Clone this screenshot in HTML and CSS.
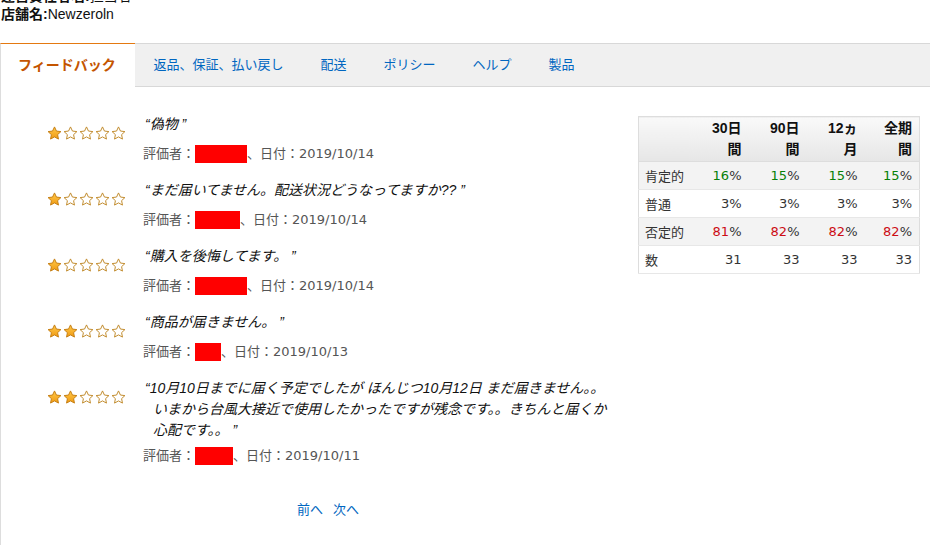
FILE: index.html
```html
<!DOCTYPE html>
<html lang="ja">
<head>
<meta charset="utf-8">
<link rel="stylesheet" href="styles.css">
</head>
<body>
<div class="seller">
  <div class="seller-line"><b>運営責任者名:</b>担当者</div>
  <div class="seller-line"><b>店舗名:</b>Newzeroln</div>
</div>
<div class="tabs">
  <div class="tab active">フィードバック</div>
  <div class="tab">返品、保証、払い戻し</div>
  <div class="tab">配送</div>
  <div class="tab">ポリシー</div>
  <div class="tab">ヘルプ</div>
  <div class="tab">製品</div>
</div>
<div class="content">
  <div class="reviews">
    <div class="review">
      <div class="stars s1"><span></span><span></span><span></span><span></span><span></span></div>
      <div class="body">
        <div class="title">“偽物 ”</div>
        <div class="meta">評価者：<span class="redact w52"></span>、日付：2019/10/14</div>
      </div>
    </div>
    <div class="review">
      <div class="stars s1"><span></span><span></span><span></span><span></span><span></span></div>
      <div class="body">
        <div class="title">“まだ届いてません。配送状況どうなってますか?? ”</div>
        <div class="meta">評価者：<span class="redact w45"></span>、日付：2019/10/14</div>
      </div>
    </div>
    <div class="review">
      <div class="stars s1"><span></span><span></span><span></span><span></span><span></span></div>
      <div class="body">
        <div class="title">“購入を後悔してます。 ”</div>
        <div class="meta">評価者：<span class="redact w52"></span>、日付：2019/10/14</div>
      </div>
    </div>
    <div class="review">
      <div class="stars s2"><span></span><span></span><span></span><span></span><span></span></div>
      <div class="body">
        <div class="title">“商品が届きません。 ”</div>
        <div class="meta">評価者：<span class="redact w26"></span>、日付：2019/10/13</div>
      </div>
    </div>
    <div class="review">
      <div class="stars s2"><span></span><span></span><span></span><span></span><span></span></div>
      <div class="body">
        <div class="title long">“10月10日までに届く予定でしたが ほんじつ10月12日 まだ届きません。。いまから台風大接近で使用したかったですが残念です。。きちんと届くか心配です。。 ”</div>
        <div class="meta">評価者：<span class="redact w38"></span>、日付：2019/10/11</div>
      </div>
    </div>
    <div class="pager"><a>前へ</a><a>次へ</a></div>
  </div>
  <table class="stats">
    <thead>
      <tr><th></th><th>30日<br>間</th><th>90日<br>間</th><th>12ヵ<br>月</th><th>全期<br>間</th></tr>
    </thead>
    <tbody>
      <tr class="shade"><td>肯定的</td><td><span class="pos">16</span>%</td><td><span class="pos">15</span>%</td><td><span class="pos">15</span>%</td><td><span class="pos">15</span>%</td></tr>
      <tr><td>普通</td><td>3%</td><td>3%</td><td>3%</td><td>3%</td></tr>
      <tr class="shade"><td>否定的</td><td><span class="neg">81</span>%</td><td><span class="neg">82</span>%</td><td><span class="neg">82</span>%</td><td><span class="neg">82</span>%</td></tr>
      <tr><td>数</td><td>31</td><td>33</td><td>33</td><td>33</td></tr>
    </tbody>
  </table>
</div>
</body>
</html>
```
FILE: styles.css
```css
html, body {
  margin: 0;
  padding: 0;
  background: #fff;
}
body {
  font-family: "Liberation Sans", "Noto Sans CJK JP", sans-serif;
  font-size: 13px;
  color: #111;
  overflow: hidden;
  height: 545px;
}
.seller {
  margin-top: -13px;
  padding-left: 1px;
}
.seller-line {
  line-height: 18px;
  font-size: 14px;
}
.seller-line b {
  font-weight: bold;
}
.tabs {
  margin-top: 20px;
  display: flex;
  height: 42px;
  background: #f0f0f0;
  border-top: 1px solid #d8d8d8;
  border-bottom: 1px solid #d8d8d8;
}
.tab {
  padding: 0 18.5px;
  line-height: 42px;
  color: #0066c0;
  font-size: 13px;
  white-space: nowrap;
}
.tab.active {
  background: #fff;
  color: #c45500;
  font-weight: bold;
  font-size: 14px;
  width: 99px;
  padding: 0 18px 0 17px;
  border-top: 1px solid #e47911;
  border-left: 1px solid #ddd;
  margin-top: -1px;
  margin-bottom: -1px;
  line-height: 43px;
}
.content {
  display: flex;
  border-left: 1px solid #ddd;
  height: 460px;
  padding-top: 27px;
  box-sizing: border-box;
}
.reviews {
  width: 637px;
  flex: none;
}
.review {
  display: flex;
  margin-bottom: 16px;
}
.stars {
  display: flex;
  padding-left: 46px;
  width: 96px;
  flex: none;
  margin-top: 12px;
  height: 14px;
}
.stars span {
  width: 15px;
  height: 14px;
  margin-right: 1px;
  background: url("data:image/svg+xml,%3Csvg xmlns='http://www.w3.org/2000/svg' viewBox='0 0 24 23'%3E%3Cpath d='M12 1.5l3.2 6.8 7.3.9-5.4 5 1.4 7.3L12 17.9l-6.5 3.6 1.4-7.3-5.4-5 7.3-.9z' fill='%23fff' stroke='%23c08a2a' stroke-width='1.6' stroke-linejoin='round'/%3E%3C/svg%3E") no-repeat center / 15px 14px;
}
.stars.s1 span:nth-child(1),
.stars.s2 span:nth-child(-n+2) {
  background-image: url("data:image/svg+xml,%3Csvg xmlns='http://www.w3.org/2000/svg' viewBox='0 0 24 23'%3E%3ClinearGradient id='g' x1='0' y1='0' x2='0' y2='1'%3E%3Cstop offset='0' stop-color='%23ffc94a'/%3E%3Cstop offset='1' stop-color='%23f09a13'/%3E%3C/linearGradient%3E%3Cpath d='M12 1.5l3.2 6.8 7.3.9-5.4 5 1.4 7.3L12 17.9l-6.5 3.6 1.4-7.3-5.4-5 7.3-.9z' fill='url(%23g)' stroke='%23c47d12' stroke-width='1.6' stroke-linejoin='round'/%3E%3C/svg%3E");
}
.body {
  width: 474px;
}
.title {
  font-style: italic;
  font-size: 14px;
  line-height: 21px;
  color: #111;
  padding-left: 10px;
  text-indent: -8px;
}
.meta {
  margin-top: 9px;
  line-height: 20px;
  color: #555;
  font-family: "DejaVu Sans", "Noto Sans CJK JP", sans-serif;
  font-size: 13px;
  display: flex;
  align-items: center;
}
.title.long + .meta {
  margin-top: 5px;
}
.redact {
  display: inline-block;
  height: 18px;
  background: #ff0000;
}
.w52 { width: 52px; }
.w45 { width: 45px; }
.w26 { width: 26px; }
.w38 { width: 38px; }
.pager {
  padding-left: 296px;
  margin-top: 34px;
  line-height: 20px;
  display: flex;
  gap: 10px;
}
.pager a {
  color: #0066c0;
  font-size: 13px;
}
.stats {
  width: 281px;
  table-layout: fixed;
  border-collapse: collapse;
  border: 1px solid #ddd;
  font-family: "DejaVu Sans", "Noto Sans CJK JP", sans-serif;
  font-size: 13px;
  align-self: flex-start;
  margin-top: 2px;
}
.stats th {
  background: linear-gradient(#f9f9f9, #e6e6e6);
  font-family: "Liberation Sans", "Noto Sans CJK JP", sans-serif;
  font-weight: bold;
  font-size: 14px;
  text-align: right;
  height: 45px;
  line-height: 21px;
  padding: 0 4px 0 0;
  width: 58px;
  color: #111;
  border-bottom: 1px solid #ddd;
  box-sizing: border-box;
}
.stats th:first-child {
  width: 49px;
}
.stats th:last-child,
.stats td:last-child {
  padding-right: 7px;
}
.stats td {
  height: 28px;
  padding: 0 4px 0 0;
  text-align: right;
  color: #333;
  border-bottom: 1px solid #e7e7e7;
  box-sizing: border-box;
  white-space: nowrap;
}
.stats td:first-child {
  text-align: left;
  padding-left: 6px;
  font-family: "Noto Sans CJK JP", sans-serif;
  color: #333;
}
.stats tr.shade td {
  background: #f3f3f3;
}
.pos { color: #078007; }
.neg { color: #cc0c14; }
```
